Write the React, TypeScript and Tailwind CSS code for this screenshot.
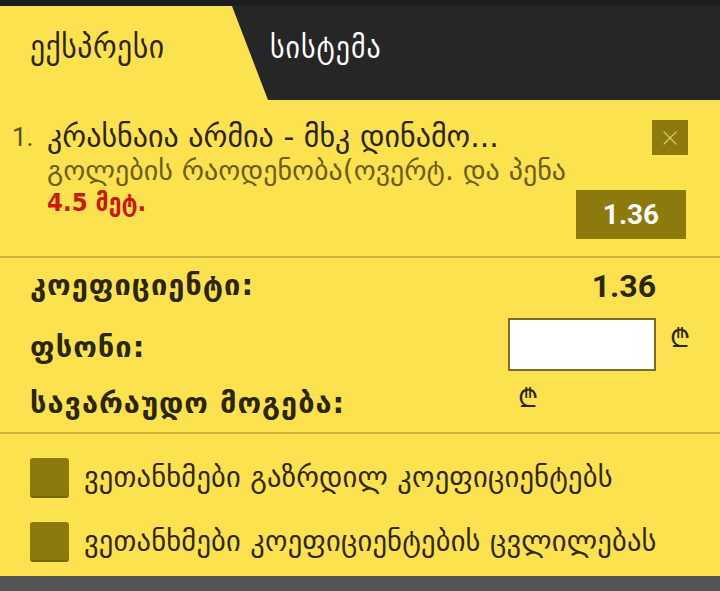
import { X } from 'lucide-react';

const font = { fontFamily: '"DejaVu Sans", sans-serif' };
const narrow = { fontFamily: '"DejaVu Sans Condensed", "DejaVu Sans", sans-serif' };
const digits = { fontFamily: 'Roboto, "DejaVu Sans", sans-serif' };

function Checkbox({ label }: { label: string }) {
    return (
        <div className="flex items-center gap-[15px] h-[40px]">
            <div className="w-[39px] h-[40px] rounded-[3px] bg-[#8c7a0c] shadow-[inset_0_-2px_0_rgba(0,0,0,0.15)]" />
            <span className="text-[28.5px] text-[#2f2905] tracking-[0.2px]">{label}</span>
        </div>
    );
}

export default function App() {
    return (
        <div className="w-[720px] h-[591px] overflow-hidden bg-[#fde24f] flex flex-col" style={font}>
            <div className="h-[6px] bg-[#1c1e22]" />
            <div className="h-[94px] bg-[#262626] flex items-start pt-[20px] relative" style={narrow}>
                <div className="absolute inset-y-0 left-0 w-[268px] bg-[#fde24f] [clip-path:polygon(0_0,232px_0,100%_100%,0_100%)]" />
                <span className="relative ml-[30px] w-[240px] text-[33px] leading-[42px] text-[#2b2608] tracking-[0.5px]">ექსპრესი</span>
                <span className="relative text-[31px] leading-[42px] text-white tracking-[1px]">სისტემა</span>
            </div>

            <div className="h-[158px] border-b-2 border-[#cfb63a] flex pl-[12px] pr-[34px] pt-[20px]">
                <div className="flex-1 flex">
                    <span className="text-[26px] text-[#5a5020] leading-[34px] w-[35px]" style={digits}>1.</span>
                    <div className="flex flex-col">
                        <span className="text-[30px] leading-[34px] text-[#2b2608]">კრასნაია არმია - მხკ დინამო...</span>
                        <span className="text-[28px] leading-[34px] text-[#6b5f1a]">გოლების რაოდენობა(ოვერტ. და პენა</span>
                        <span className="text-[25.5px] leading-[28px] font-bold text-[#c9190c]" style={narrow}>4.5 მეტ.</span>
                    </div>
                </div>
                <div className="flex flex-col items-end">
                    <div className="w-[36px] h-[35px] bg-[#8c7a0c] flex items-center justify-center mr-[-2px]">
                        <X size={24} strokeWidth={1.2} color="#d8c86a" />
                    </div>
                    <div className="mt-[35px] w-[110px] h-[49px] bg-[#8c7a0c] flex items-center justify-center text-white font-bold text-[28px]" style={digits}>
                        1.36
                    </div>
                </div>
            </div>

            <div className="h-[176px] border-b-2 border-[#cfb63a] pl-[30px] pt-[8px] flex flex-col text-[#2b2608] font-bold text-[29px] tracking-[1px]">
                <div className="flex items-center h-[40px]">
                    <span className="flex-1">კოეფიციენტი:</span>
                    <span className="mr-[64px] text-[32px] tracking-normal" style={digits}>1.36</span>
                </div>
                <div className="flex items-center h-[76px]">
                    <span className="flex-1 pt-[8px]">ფსონი:</span>
                    <div className="w-[148px] h-[53px] bg-white border-2 border-[#7a6d2a] mr-[14px]" />
                    <span className="w-[50px] font-normal text-[26px] -mt-[12px]">₾</span>
                </div>
                <div className="flex items-center h-[44px]">
                    <span className="w-[488px]">სავარაუდო მოგება:</span>
                    <span className="font-normal text-[26px] -mt-[12px]">₾</span>
                </div>
            </div>

            <div className="flex flex-col gap-[24px] pl-[30px] pt-[24px] h-[142px]">
                <Checkbox label="ვეთანხმები გაზრდილ კოეფიციენტებს" />
                <Checkbox label="ვეთანხმები კოეფიციენტების ცვლილებას" />
            </div>
            <div className="flex-1 bg-[#555555]" />
        </div>
    );
}
